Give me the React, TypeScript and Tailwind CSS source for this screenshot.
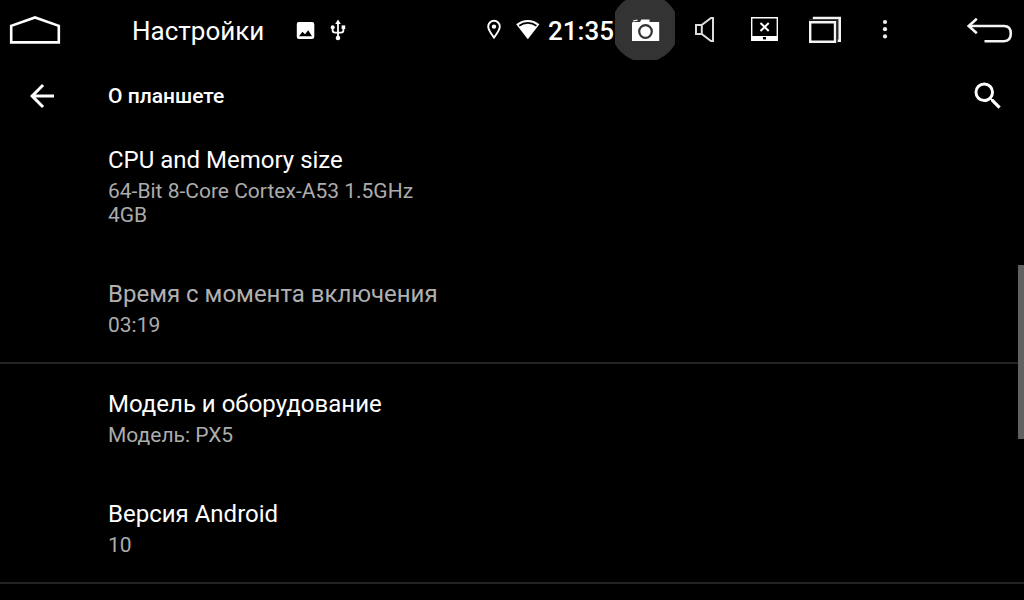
import type { ReactNode } from 'react';

type Entry = { title: string; lines: string[]; disabled?: boolean; divider?: boolean };

const entries: Entry[] = [
  { title: 'CPU and Memory size', lines: ['64-Bit 8-Core Cortex-A53 1.5GHz', '4GB'] },
  { title: 'Время с момента включения', lines: ['03:19'], disabled: true, divider: true },
  { title: 'Модель и оборудование', lines: ['Модель: PX5'] },
  { title: 'Версия Android', lines: ['10'], divider: true },
];

function BarButton({ label, className, children }: { label: string; className: string; children: ReactNode }) {
  return (
    <button type="button" aria-label={label} className={`flex h-[60px] shrink-0 items-center justify-center ${className}`}>
      {children}
    </button>
  );
}

function StatusBar() {
  return (
    <header className="flex h-[60px] items-center">
      <BarButton label="Домой" className="w-[70px]">
        <svg width="70" height="60" viewBox="0 0 70 60" fill="none" stroke="#fff" strokeWidth="2.6">
          <path d="M11.2 42.4V25.8L35 17.4L58.8 25.8V42.4Z" />
        </svg>
      </BarButton>
      <h1 className="ml-[62px] pt-[2px] text-[26px] leading-8 text-white">Настройки</h1>
      <svg className="ml-8 shrink-0" width="19" height="60" viewBox="0 0 19 60" fill="#fff">
        <path fillRule="evenodd" d="M2.5 22H16Q18.3 22 18.3 24.3V36.8Q18.3 39 16 39H3Q.8 39 .8 36.8V24Q.8 22 2.5 22ZM3 36.2H16L12.2 30.3L9 34.2L6.4 31.7Z" />
      </svg>
      <svg className="ml-[15px] shrink-0" width="16" height="60" viewBox="0 0 16 60" fill="none" stroke="#fff" strokeWidth="1.8">
        <path d="M8 23V37M2.6 27V30.3Q2.6 32.6 5 32.6H11Q13.4 32.6 13.4 30.3V27" />
        <path d="M8 19.6L10.8 24H5.2Z" fill="#fff" stroke="none" />
        <circle cx="8" cy="38" r="2.3" fill="#fff" stroke="none" />
        <circle cx="2.7" cy="27.2" r="2" fill="#fff" stroke="none" />
        <path d="M11.6 25.4h3.6V29h-3.6Z" fill="#fff" stroke="none" />
      </svg>
      <div className="ml-auto flex items-center pr-px">
        <svg width="14" height="60" viewBox="0 0 14 60" fill="none" stroke="#fff" strokeWidth="1.9">
          <path d="M7 37.6C4.2 34 1.2 30 1.2 26.6A5.8 5.8 0 0 1 12.8 26.6C12.8 30 9.8 34 7 37.6Z" />
          <circle cx="7" cy="26.6" r="2.2" fill="#fff" stroke="none" />
        </svg>
        <svg className="ml-[15px]" width="24" height="60" viewBox="0 0 24 60" fill="#fff">
          <path d="M.2 24.2Q5.5 19.9 11.8 19.9T23.4 24.2L11.8 39.3Z" />
          <path d="M3.2 25.8Q7 22.9 11.8 22.9T20.4 25.8" fill="none" stroke="#000" strokeWidth="1.7" />
        </svg>
        <time className="ml-2 pt-[2px] text-[26px] leading-8 font-medium text-white">21:35</time>
      </div>
      <BarButton label="Снимок экрана" className="w-[60px]">
        <svg width="60" height="60" viewBox="0 0 60 60">
          <circle cx="30" cy="28" r="34" fill="#333" />
          <path fill="#fff" d="M17 22.5L18.5 22H25L26.4 19.4H34.5V22H44.2V41H17Z" />
          <path d="M18 21L22.5 20.2" stroke="#fff" strokeWidth="1.2" />
          <circle cx="30.5" cy="31.5" r="6.3" fill="#fff" stroke="#333" strokeWidth="2.2" />
        </svg>
      </BarButton>
      <BarButton label="Звук" className="w-[60px]">
        <svg width="60" height="60" viewBox="0 0 60 60" fill="none" stroke="#ddd" strokeWidth="2">
          <path d="M21 25H26.7L36 18H38V41H36L26.7 34H21ZM26.8 25V34" />
        </svg>
      </BarButton>
      <BarButton label="Выключить экран" className="w-[60px]">
        <svg width="60" height="60" viewBox="0 0 60 60" fill="none" stroke="#fff">
          <path d="M16.7 17.7H42.3V40.2H16.7Z" strokeWidth="1.4" />
          <path d="M16 36H43V41H16Z" fill="#fff" stroke="none" />
          <path d="M25.5 23L33.7 31M33.7 23L25.5 31" strokeWidth="2" />
          <path d="M28 37H31V39.4H28Z" fill="#000" stroke="none" />
        </svg>
      </BarButton>
      <BarButton label="Недавние приложения" className="w-[60px]">
        <svg width="60" height="60" viewBox="0 0 60 60" fill="none" stroke="#f4f4f4">
          <path d="M15.2 22.2H40V41.8H15.2Z" strokeWidth="2.4" />
          <path d="M17.8 18H44.7V40.8H42.5" strokeWidth="2.6" />
          <path d="M14 19.9H42.1V43" stroke="#444" strokeWidth="1" />
        </svg>
      </BarButton>
      <BarButton label="Меню" className="w-[60px]">
        <svg width="60" height="60" viewBox="0 0 60 60" fill="#eee">
          <circle cx="30" cy="22" r="2.1" />
          <circle cx="30" cy="29.2" r="2.1" />
          <circle cx="30" cy="36.4" r="2.1" />
        </svg>
      </BarButton>
      <BarButton label="Назад" className="ml-[39px] w-[70px]">
        <svg width="70" height="60" viewBox="0 0 70 60" fill="none" stroke="#f4f4f4" strokeWidth="2.6">
          <path d="M15 26H50Q56.8 26 56.8 33.6T50 41.2H30.5" />
          <path d="M22.8 18.7L14.7 26L22.8 33.3" />
        </svg>
      </BarButton>
    </header>
  );
}

function Toolbar() {
  return (
    <div className="flex h-[60px] items-center pt-[12px] pr-[18px]">
      <button type="button" aria-label="Вернуться" className="ml-6 flex h-9 w-9 shrink-0 items-center justify-center">
        <svg width="36" height="36" viewBox="0 0 24 24" fill="#fff">
          <path d="M20 11H7.83l5.59-5.59L12 4l-8 8 8 8 1.41-1.41L7.83 13H20v-2z" />
        </svg>
      </button>
      <h2 className="ml-12 text-[21px] leading-7 font-medium text-white">О планшете</h2>
      <button type="button" aria-label="Поиск" className="ml-auto flex h-9 w-9 shrink-0 items-center justify-center">
        <svg width="36" height="36" viewBox="0 0 24 24" fill="#fff">
          <path d="M15.5 14h-.79l-.28-.27A6.47 6.47 0 0 0 16 9.5 6.5 6.5 0 1 0 9.5 16c1.61 0 3.09-.59 4.23-1.57l.27.28v.79l5 4.99L20.49 19l-4.99-5zm-6 0C7.01 14 5 11.99 5 9.5S7.01 5 9.5 5 14 7.01 14 9.5 11.99 14 9.5 14z" />
        </svg>
      </button>
    </div>
  );
}

export default function App() {
  return (
    <div className="relative min-h-screen bg-black font-[Roboto,sans-serif]">
      <StatusBar />
      <main>
        <Toolbar />
        <ul>
          {entries.map((entry) => (
            <li
              key={entry.title}
              className={`border-b-2 pt-[26px] pr-6 pb-[25px] pl-[108px] ${entry.divider ? 'border-[#232323]' : 'border-transparent'}`}
            >
              <h3 className={`text-[24px] leading-7 ${entry.disabled ? 'text-[#b0b0b0]' : 'text-white'}`}>{entry.title}</h3>
              <div className="mt-[5px] text-[21px] leading-6 text-[#acacac]">
                {entry.lines.map((line) => (
                  <p key={line}>{line}</p>
                ))}
              </div>
            </li>
          ))}
        </ul>
      </main>
      <div className="absolute top-[265px] right-0 h-[174px] w-[6px] bg-[#616161]" />
    </div>
  );
}
